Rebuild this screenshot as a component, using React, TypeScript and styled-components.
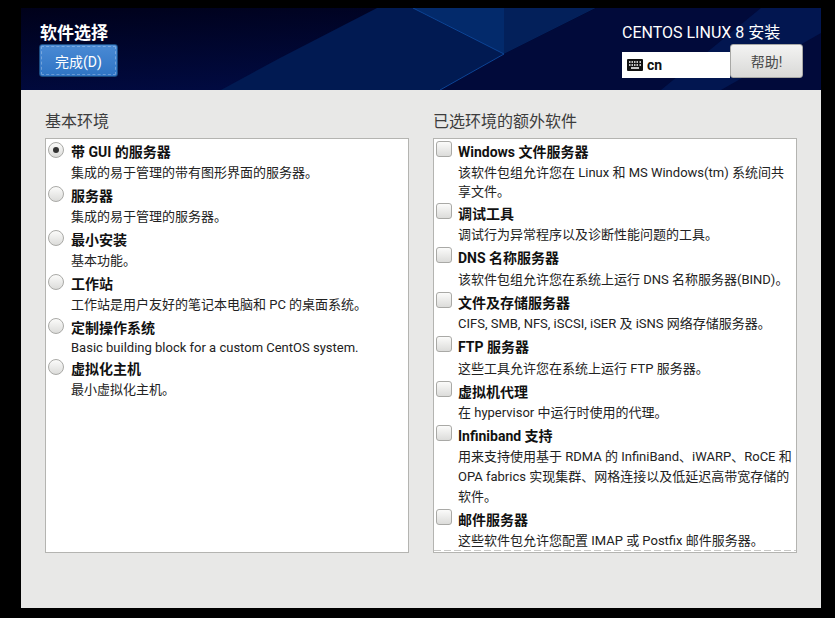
import styled, { createGlobalStyle } from "styled-components";

const GlobalStyle = createGlobalStyle`
  html, body {
    margin: 0;
    padding: 0;
    background: #000;
  }
  body {
    font-family: Roboto, "Noto Sans CJK SC", sans-serif;
  }
`;

const Screen = styled.div`
  width: 835px;
  height: 618px;
  box-sizing: border-box;
  padding: 8px 14px 10px 21px;
  background: #000;
  overflow: hidden;
`;

const Spoke = styled.div`
  width: 800px;
  height: 600px;
  display: flex;
  flex-direction: column;
  background: #e8e8e7;
`;

const Header = styled.header`
  position: relative;
  height: 82px;
  flex: none;
  box-sizing: border-box;
  padding: 13px 18px 0 18px;
  display: flex;
  justify-content: space-between;
  background: #010b33;
  overflow: hidden;
`;

const HeaderArt = styled.svg`
  position: absolute;
  inset: 0;
  width: 100%;
  height: 100%;
`;

const HeaderLeft = styled.div`
  position: relative;
  display: flex;
  flex-direction: column;
  align-items: flex-start;
`;

const HeaderRight = styled.div`
  position: relative;
  width: 181px;
  display: flex;
  flex-direction: column;
  align-items: flex-start;
`;

const Title = styled.h1`
  margin: 0 0 0 1px;
  height: 23px;
  font-size: 17px;
  line-height: 24px;
  font-weight: 700;
  color: #fff;
`;

const DoneButton = styled.button`
  width: 79px;
  height: 33px;
  padding: 0;
  border: 1px solid #1a4a80;
  border-radius: 3px;
  outline: 1px dashed rgba(255, 255, 255, 0.28);
  outline-offset: -3px;
  background: linear-gradient(#4a8ad4, #2f74c4);
  color: #fff;
  font-family: inherit;
  font-size: 14px;
`;

const ProductName = styled.div`
  height: 23px;
  font-size: 16px;
  line-height: 24px;
  color: #fff;
  white-space: nowrap;
`;

const KeyboardRow = styled.div`
  display: flex;
  align-items: flex-start;
`;

const Layout = styled.div`
  width: 108px;
  height: 26px;
  margin-top: 8px;
  box-sizing: border-box;
  padding-left: 5px;
  display: flex;
  align-items: center;
  gap: 4px;
  background: #fff;
  color: #111;
  font-size: 14px;
  font-weight: 700;
`;

const HelpButton = styled.button`
  width: 73px;
  height: 34px;
  padding: 0;
  border: 1px solid #a8a8a5;
  border-radius: 3px;
  background: linear-gradient(#f3f3f2, #d9d9d7);
  color: #4a4a4a;
  font-family: inherit;
  font-size: 14px;
`;

const Body = styled.main`
  flex: 1;
  padding: 20px 24px 0 24px;
  display: grid;
  grid-template-columns: 364px 364px;
  column-gap: 24px;
  align-items: start;
`;

const Section = styled.section`
  display: flex;
  flex-direction: column;
`;

const SectionLabel = styled.h2`
  margin: 0;
  height: 28px;
  font-size: 16px;
  line-height: 24px;
  font-weight: 400;
  color: #3c3c3c;
`;

const ListBox = styled.div`
  position: relative;
  height: 415px;
  box-sizing: border-box;
  padding-top: 2px;
  border: 1px solid #b4b4b1;
  background: #fff;
  overflow: hidden;
`;

const ScrollEdge = styled.div`
  position: absolute;
  left: 0;
  right: 0;
  bottom: 1px;
  height: 1px;
  background: repeating-linear-gradient(90deg, #c8c8c6 0 7px, transparent 7px 10px);
`;

const Row = styled.div<{ $gap: number }>`
  display: flex;
  align-items: flex-start;
  gap: ${(p) => p.$gap}px;
  padding: 0 0 2px 2px;
`;

const RowText = styled.div`
  flex: 1;
  min-width: 0;
  padding-right: 4px;
`;

const RowTitle = styled.div`
  font-size: 14px;
  line-height: 22px;
  font-weight: 700;
  color: #111;
`;

const RowDesc = styled.div<{ $leading?: number }>`
  font-size: 13px;
  line-height: ${(p) => p.$leading ?? 20}px;
  color: #222;
`;

const Radio = styled.span<{ $checked?: boolean }>`
  flex: none;
  width: 16px;
  height: 16px;
  box-sizing: border-box;
  margin-top: 1px;
  display: flex;
  align-items: center;
  justify-content: center;
  border: 1px solid #a9a9a6;
  border-radius: 50%;
  background: linear-gradient(#fbfbfa, #dcdcda);

  &::after {
    content: "";
    display: ${(p) => (p.$checked ? "block" : "none")};
    width: 6px;
    height: 6px;
    border-radius: 50%;
    background: #333;
  }
`;

const Check = styled.span`
  flex: none;
  width: 16px;
  height: 16px;
  box-sizing: border-box;
  border: 1px solid #a9a9a6;
  border-radius: 3px;
  background: linear-gradient(#fbfbfa, #dcdcda);
`;

const KeyboardIcon = () => (
  <svg width="16" height="12" viewBox="0 0 16 12">
    <rect width="16" height="12" rx="1" fill="#111" />
    <path
      d="M2 3h1.500M4.500 3H6M7 3h1.500M9.500 3H11M12.500 3H14M2 6h1.500M4.500 6H6M7 6h1.500M9.500 6H11M12.500 6H14M4 9h8"
      stroke="#fff"
      strokeWidth="1.300"
    />
  </svg>
);

type Item = { title: string; desc: string; checked?: boolean; leading?: number };

const environments: Item[] = [
  { title: "带 GUI 的服务器", desc: "集成的易于管理的带有图形界面的服务器。", checked: true },
  { title: "服务器", desc: "集成的易于管理的服务器。" },
  { title: "最小安装", desc: "基本功能。" },
  { title: "工作站", desc: "工作站是用户友好的笔记本电脑和 PC 的桌面系统。" },
  { title: "定制操作系统", desc: "Basic building block for a custom CentOS system.", leading: 17 },
  { title: "虚拟化主机", desc: "最小虚拟化主机。" },
];

const addons: Item[] = [
  { title: "Windows 文件服务器", desc: "该软件包组允许您在 Linux 和 MS Windows(tm) 系统间共享文件。", leading: 19 },
  { title: "调试工具", desc: "调试行为异常程序以及诊断性能问题的工具。" },
  { title: "DNS 名称服务器", desc: "该软件包组允许您在系统上运行 DNS 名称服务器(BIND)。", leading: 21 },
  { title: "文件及存储服务器", desc: "CIFS, SMB, NFS, iSCSI, iSER 及 iSNS 网络存储服务器。" },
  { title: "FTP 服务器", desc: "这些工具允许您在系统上运行 FTP 服务器。", leading: 21 },
  { title: "虚拟机代理", desc: "在 hypervisor 中运行时使用的代理。" },
  {
    title: "Infiniband 支持",
    desc: "用来支持使用基于 RDMA 的 InfiniBand、iWARP、RoCE 和 OPA fabrics 实现集群、网格连接以及低延迟高带宽存储的软件。",
  },
  { title: "邮件服务器", desc: "这些软件包允许您配置 IMAP 或 Postfix 邮件服务器。" },
];

export default function App() {
  return (
    <Screen>
      <GlobalStyle />
      <Spoke>
        <Header>
          <HeaderArt viewBox="0 0 800 82" preserveAspectRatio="none">
            <defs>
              <linearGradient id="headerBase" x1="0" y1="0" x2="0.6" y2="1">
                <stop offset="0" stopColor="#00011a" />
                <stop offset="1" stopColor="#010c48" />
              </linearGradient>
            </defs>
            <rect width="800" height="82" fill="url(#headerBase)" />
            <polygon points="356,0 392,0 483,46 419,82 200,82 259,50" fill="#011a52" />
            <polygon points="392,0 483,0 483,46" fill="#032a6b" />
            <polygon points="483,0 575,0 483,46" fill="#03205a" />
            <polygon points="483,46 575,0 800,0 800,82 419,82" fill="#010a3a" />
            <polygon points="740,0 800,0 800,25 700,82 640,82" fill="#021650" />
            <path d="M392 0 L483 46 L419 82" stroke="#0d4596" strokeWidth="1" fill="none" />
          </HeaderArt>
          <HeaderLeft>
            <Title>软件选择</Title>
            <DoneButton>完成(D)</DoneButton>
          </HeaderLeft>
          <HeaderRight>
            <ProductName>CENTOS LINUX 8 安装</ProductName>
            <KeyboardRow>
              <Layout>
                <KeyboardIcon />
                cn
              </Layout>
              <HelpButton>帮助!</HelpButton>
            </KeyboardRow>
          </HeaderRight>
        </Header>
        <Body>
          <Section>
            <SectionLabel>基本环境</SectionLabel>
            <ListBox>
              {environments.map((item) => (
                <Row key={item.title} $gap={7}>
                  <Radio $checked={item.checked} />
                  <RowText>
                    <RowTitle>{item.title}</RowTitle>
                    <RowDesc $leading={item.leading}>{item.desc}</RowDesc>
                  </RowText>
                </Row>
              ))}
            </ListBox>
          </Section>
          <Section>
            <SectionLabel>已选环境的额外软件</SectionLabel>
            <ListBox>
              {addons.map((item) => (
                <Row key={item.title} $gap={6}>
                  <Check />
                  <RowText>
                    <RowTitle>{item.title}</RowTitle>
                    <RowDesc $leading={item.leading}>{item.desc}</RowDesc>
                  </RowText>
                </Row>
              ))}
              <ScrollEdge />
            </ListBox>
          </Section>
        </Body>
      </Spoke>
    </Screen>
  );
}
